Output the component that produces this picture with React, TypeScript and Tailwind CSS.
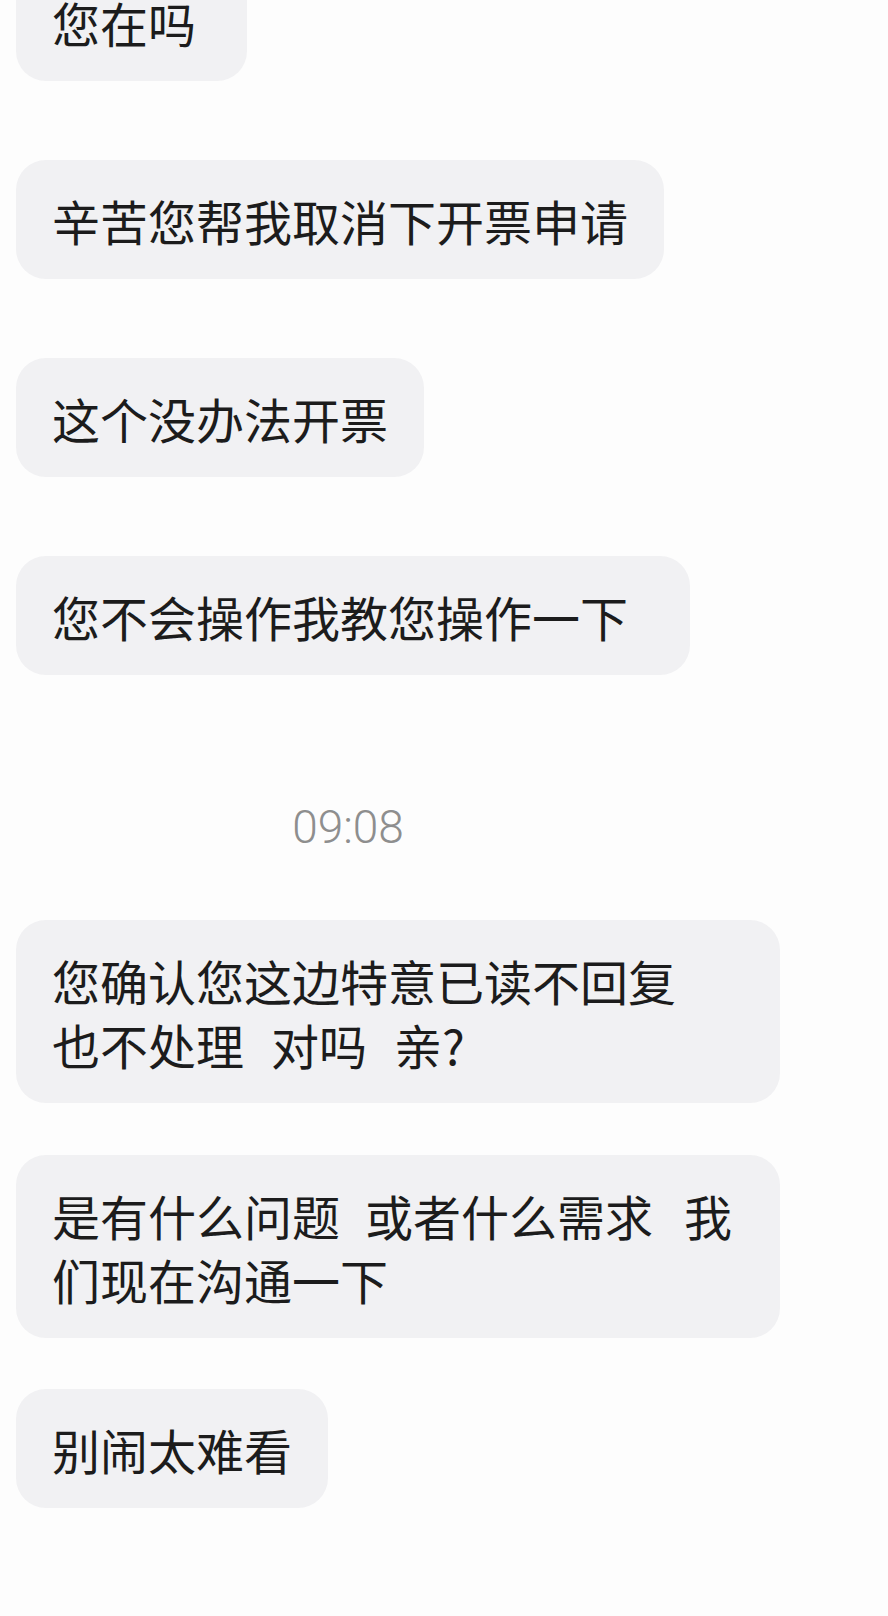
type Segment = string | { space: string };

type Message = {
  id: string;
  lines: Segment[][];
  width?: string;
  gap: string;
};

const messages: Message[] = [
  { id: "m1", lines: [["您在吗"]], width: "w-[231px]", gap: "mt-[-38px]" },
  { id: "m2", lines: [["辛苦您帮我取消下开票申请"]], gap: "mt-[79px]" },
  { id: "m3", lines: [["这个没办法开票"]], gap: "mt-[79px]" },
  { id: "m4", lines: [["您不会操作我教您操作一下"]], width: "w-[674px]", gap: "mt-[79px]" },
];

const laterMessages: Message[] = [
  {
    id: "m5",
    lines: [
      ["您确认您这边特意已读不回复"],
      ["也不处理", { space: "w-[27px]" }, "对吗", { space: "w-[27px]" }, "亲?"],
    ],
    width: "w-[764px]",
    gap: "mt-[66px]",
  },
  {
    id: "m6",
    lines: [
      ["是有什么问题", { space: "w-[25px]" }, "或者什么需求", { space: "w-[31px]" }, "我"],
      ["们现在沟通一下"],
    ],
    width: "w-[764px]",
    gap: "mt-[52px]",
  },
  { id: "m7", lines: [["别闹太难看"]], gap: "mt-[51px]" },
];

function Bubble({ message }: { message: Message }) {
  return (
    <div className={`flex ${message.gap}`}>
      <div
        className={`rounded-[30px] bg-[#f1f1f3] px-[36px] py-[27.5px] text-[48px] leading-[64px] text-[#1c1c1c] ${
          message.width ?? ""
        }`}
      >
        {message.lines.map((line, i) => (
          <div key={i} className="whitespace-nowrap">
            {line.map((seg, j) =>
              typeof seg === "string" ? (
                <span key={j}>{seg}</span>
              ) : (
                <span key={j} className={`inline-block ${seg.space}`} />
              )
            )}
          </div>
        ))}
      </div>
    </div>
  );
}

export default function App() {
  return (
    <div
      className="h-[1616px] w-[888px] overflow-hidden bg-[#fdfdfd] pl-[16px]"
      style={{ fontFamily: '"Noto Sans CJK SC", "Noto Sans", sans-serif' }}
    >
      {messages.map((m) => (
        <Bubble key={m.id} message={m} />
      ))}

      <div className="mt-[125px] w-[664px] text-center">
        <span className="font-['Roboto',sans-serif] text-[46px] font-light leading-[54px] text-[#8e8e8e]">
          09:08
        </span>
      </div>

      {laterMessages.map((m) => (
        <Bubble key={m.id} message={m} />
      ))}
    </div>
  );
}
